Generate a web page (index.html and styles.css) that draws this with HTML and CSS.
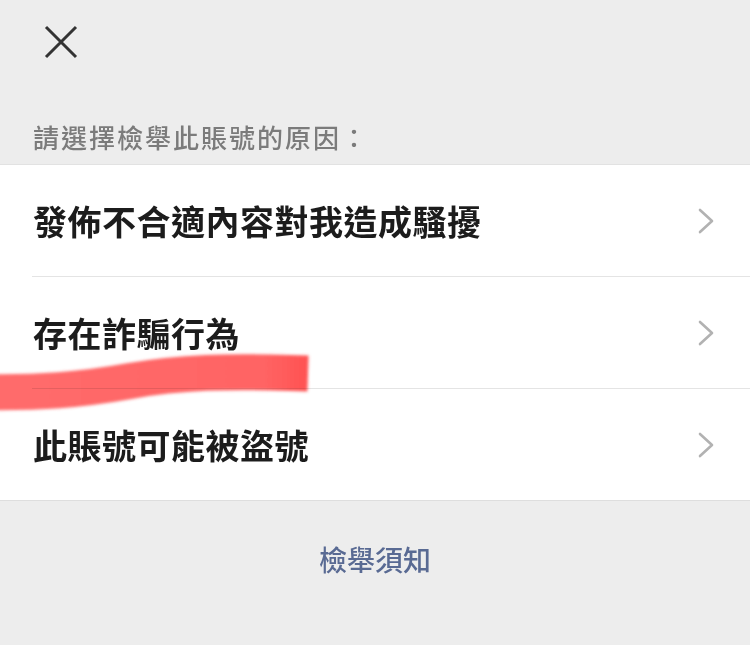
FILE: index.html
```html
<!DOCTYPE html>
<html lang="zh-Hant">
<head>
  <meta charset="UTF-8" />
  <title>檢舉</title>
  <link rel="stylesheet" href="styles.css">
</head>
<body>

  <!-- Top bar -->
  <div class="topbar">
    <svg class="close" width="34" height="34" viewBox="0 0 34 34">
      <path d="M2 2 L32 32 M32 2 L2 32" />
    </svg>
  </div>

  <div class="section-title">請選擇檢舉此賬號的原因：</div>

  <!-- Reasons -->
  <div class="reason-list">
    <div class="reason">
      <span class="reason-text">發佈不合適內容對我造成騷擾</span>
      <svg class="chevron" width="16" height="26" viewBox="0 0 16 26">
        <path d="M2 2 L14 13 L2 24" />
      </svg>
    </div>
    <div class="reason">
      <span class="reason-text">存在詐騙行為</span>
      <svg class="chevron" width="16" height="26" viewBox="0 0 16 26">
        <path d="M2 2 L14 13 L2 24" />
      </svg>
    </div>
    <div class="reason">
      <span class="reason-text">此賬號可能被盜號</span>
      <svg class="chevron" width="16" height="26" viewBox="0 0 16 26">
        <path d="M2 2 L14 13 L2 24" />
      </svg>
    </div>
  </div>

  <div class="footer">
    <a class="notice">檢舉須知</a>
  </div>

  <!-- marker scribble drawn over the screenshot -->
  <svg class="scribble" width="750" height="645" viewBox="0 0 750 645">
    <defs>
      <filter id="soft" filterUnits="userSpaceOnUse" x="-40" y="320" width="400" height="120">
        <feGaussianBlur stdDeviation="1.4" />
      </filter>
      <linearGradient id="ink" gradientUnits="userSpaceOnUse" x1="0" x2="310" y1="0" y2="0">
        <stop offset="0" stop-color="#ff6464" />
        <stop offset="0.85" stop-color="#ff5b5b" />
        <stop offset="1" stop-color="#ff4848" />
      </linearGradient>
    </defs>
    <path d="M-20 392 C 40 393, 80 390, 130 381 S 230 371, 290 373"
          stroke="url(#ink)" stroke-width="36" stroke-linecap="square"
          stroke-linejoin="round" fill="none" filter="url(#soft)" />
  </svg>

</body>
</html>
```

FILE: styles.css
```css
body {
  margin: 0;
  width: 750px;
  height: 645px;
  background: #ededed;
  font-family: "Noto Sans CJK TC", "Noto Sans CJK SC", sans-serif;
  position: relative;
  overflow: hidden;
}
.topbar {
  height: 100px;
  box-sizing: border-box;
  padding: 25px 0 0 44px;
}
.close path {
  stroke: #333;
  stroke-width: 3;
  fill: none;
}
.section-title {
  padding: 23px 33px 13px;
  font-size: 26px;
  line-height: 28px;
  letter-spacing: 2px;
  font-weight: 500;
  color: #7b7b7b;
}
.reason-list {
  background: #fff;
  border-top: 1px solid #e2e2e2;
  border-bottom: 1px solid #dedede;
}
.reason {
  height: 111px;
  margin-left: 32px;
  padding: 0 36px 0 1px;
  display: flex;
  align-items: center;
  justify-content: space-between;
  border-bottom: 1px solid #e4e4e4;
}
.reason:last-child {
  border-bottom: none;
}
.reason-text {
  font-size: 34px;
  font-weight: 700;
  letter-spacing: 0.5px;
  color: #1c1c1c;
  line-height: 40px;
}
.chevron path {
  stroke: #b2b2b2;
  stroke-width: 2.6;
  fill: none;
  stroke-linecap: round;
  stroke-linejoin: round;
}
.footer {
  padding-top: 44px;
  text-align: center;
}
.notice {
  font-size: 28px;
  line-height: 28px;
  font-weight: 500;
  color: #596a93;
}
.scribble {
  position: absolute;
  left: 0;
  top: 0;
  pointer-events: none;
  mix-blend-mode: multiply;
  opacity: 0.95;
}
```
